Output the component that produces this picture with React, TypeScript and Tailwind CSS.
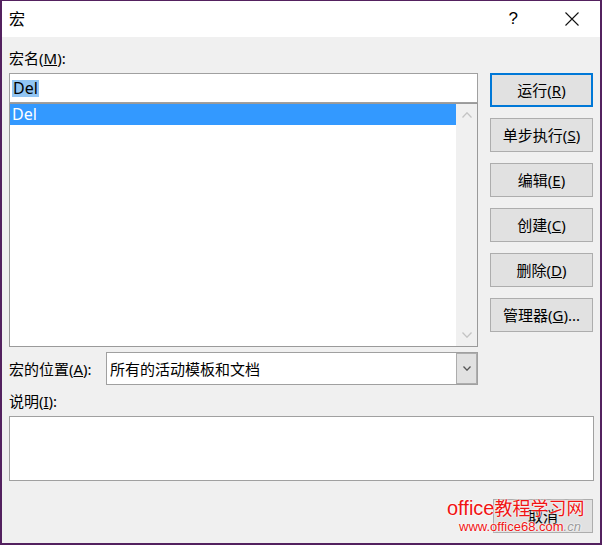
import React from "react";

const FONT = { fontFamily: '"Noto Sans", "Noto Sans CJK SC", sans-serif' };

function Btn({ children, primary }: { children: React.ReactNode; primary?: boolean }) {
  return (
    <div
      className={
        "h-[34px] w-full flex items-center justify-center bg-[#e1e1e1] text-[15px] leading-[20px] text-black " +
        (primary ? "border-2 border-[#0078d7]" : "border border-[#adadad]")
      }
    >
      {children}
    </div>
  );
}

function Chevron({ up, color, w = 10, h = 6 }: { up?: boolean; color: string; w?: number; h?: number }) {
  return (
    <svg width={w} height={h} viewBox={`0 0 ${w} ${h}`}>
      <polyline
        points={up ? `0.5,${h - 0.5} ${w / 2},0.8 ${w - 0.5},${h - 0.5}` : `0.5,0.5 ${w / 2},${h - 0.8} ${w - 0.5},0.5`}
        fill="none"
        stroke={color}
        strokeWidth="1.3"
      />
    </svg>
  );
}

export default function App() {
  return (
    <div
      className="w-[602px] h-[545px] bg-[#f0f0f0] border-x-2 border-b-2 border-t border-[#53215f] flex flex-col relative overflow-hidden text-black"
      style={FONT}
    >
      {/* title bar */}
      <div className="h-[36px] bg-white flex items-center pl-[7px] pr-[21px] shrink-0">
        <span className="text-[16px] leading-[20px]">宏</span>
        <span className="ml-auto text-[17px] leading-[20px] font-['Liberation_Sans',sans-serif]">?</span>
        <svg className="ml-[47px]" width="14" height="14" viewBox="0 0 14 14">
          <path d="M0.5 0.5 L13.5 13.5 M13.5 0.5 L0.5 13.5" stroke="#111" strokeWidth="1.1" fill="none" />
        </svg>
      </div>

      {/* content */}
      <div className="flex flex-col px-[7px]">
        <div className="mt-[11px] text-[15px] leading-[20px]">
          宏名(<u>M</u>):
        </div>
        <div className="mt-[5px] flex gap-[12px]">
          <div className="w-[469px] flex flex-col">
            <div className="h-[30px] bg-white border border-[#a0a0a0] flex items-center pl-[2px]">
              <span className="bg-[#92c5f3] text-[16px] leading-[17px] px-[1px]">Del</span>
            </div>
            <div className="h-[244px] bg-white border border-[#9a9a9a] flex">
              <div className="flex-1">
                <div className="h-[21px] bg-[#3399ff] text-white text-[16px] leading-[21px] pl-[2px]">Del</div>
              </div>
              <div className="w-[21px] bg-[#f0f0f0] flex flex-col items-center justify-between pt-[8px] pb-[8px]">
                <Chevron up color="#c4c4c4" />
                <Chevron color="#c4c4c4" />
              </div>
            </div>
          </div>
          <div className="w-[103px] flex flex-col gap-[11px]">
            <Btn primary>
              运行(<u>R</u>)
            </Btn>
            <Btn>
              单步执行(<u>S</u>)
            </Btn>
            <Btn>
              编辑(<u>E</u>)
            </Btn>
            <Btn>
              创建(<u>C</u>)
            </Btn>
            <Btn>
              删除(<u>D</u>)
            </Btn>
            <Btn>
              管理器(<u>G</u>)...
            </Btn>
          </div>
        </div>

        {/* location row */}
        <div className="mt-[5px] flex items-center">
          <div className="w-[97px] text-[15px] leading-[20px]">
            宏的位置(<u>A</u>):
          </div>
          <div className="w-[372px] h-[33px] bg-white border border-[#a0a0a0] flex">
            <div className="flex-1 flex items-center pl-[3px] text-[15px] leading-[20px]">所有的活动模板和文档</div>
            <div className="w-[21px] bg-[#e1e1e1] border border-[#adadad] flex items-center justify-center">
              <Chevron color="#555555" w={8} h={5} />
            </div>
          </div>
        </div>

        <div className="mt-[6px] text-[15px] leading-[20px]">
          说明(<u>I</u>):
        </div>
        <div className="mt-[5px] h-[65px] mr-[-1px] bg-white border border-[#a0a0a0]" />

        <div className="mt-[18px] flex justify-end">
          <div className="w-[100px] h-[34px] bg-[#e1e1e1] border border-[#adadad] flex items-center justify-center text-[15px] leading-[20px]">
            取消
          </div>
        </div>
      </div>

      {/* watermark */}
      <div
        className="absolute left-[445px] top-[496px] flex items-baseline text-[#f01414] leading-[20px] whitespace-nowrap"
        style={{ textShadow: "0 0 2px #fff, 0 0 2px #fff" }}
      >
        <span className="text-[20px] font-['Liberation_Sans',sans-serif]">office</span>
        <span className="text-[18px] font-['Noto_Sans_CJK_SC',sans-serif]">教程学习网</span>
      </div>
      <div
        className="absolute left-[457px] top-[519px] text-[13px] leading-[14px] whitespace-nowrap font-['Liberation_Sans',sans-serif]"
        style={{ textShadow: "0 0 2px #fff, 0 0 2px #fff" }}
      >
        <span className="text-[#f01414]">www.office68.com</span>
        <span className="text-[#9a9a9a] italic">.cn</span>
      </div>
    </div>
  );
}
